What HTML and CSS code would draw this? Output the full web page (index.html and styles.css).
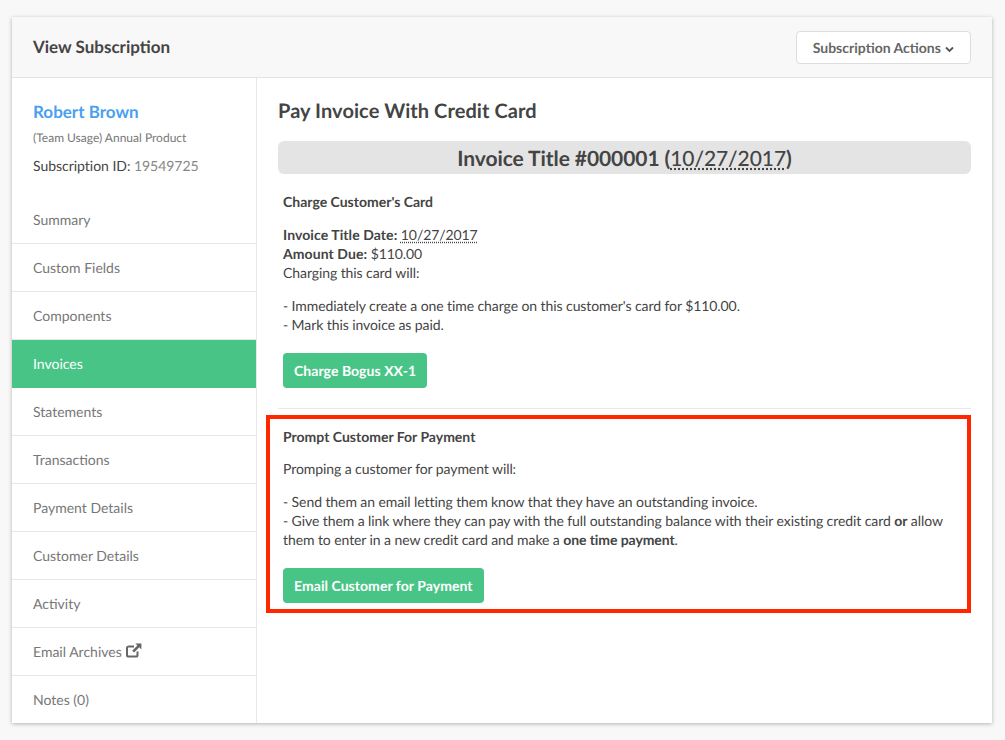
FILE: index.html
```html
<!DOCTYPE html>
<html lang="en">
<head>
<meta charset="utf-8">
<title>View Subscription</title>
<link rel="stylesheet" href="styles.css">
</head>
<body>
<div class="card">
  <header class="card-head">
    <h1>View Subscription</h1>
    <button class="actions">Subscription Actions
      <svg class="chev" width="9" height="7" viewBox="0 0 9 7"><path d="M1 1.5 4.5 5 8 1.5" fill="none" stroke="#555" stroke-width="1.8"/></svg>
    </button>
  </header>
  <div class="card-body">
    <aside class="side">
      <div class="who">
        <a class="name">Robert Brown</a>
        <div class="product">(Team Usage) Annual Product</div>
        <div class="subid">Subscription ID: <span>19549725</span></div>
      </div>
      <nav class="nav">
        <a>Summary</a>
        <a>Custom Fields</a>
        <a>Components</a>
        <a class="active">Invoices</a>
        <a>Statements</a>
        <a>Transactions</a>
        <a>Payment Details</a>
        <a>Customer Details</a>
        <a>Activity</a>
        <a>Email Archives <svg class="ext" width="16" height="15" viewBox="0 0 16 15"><path d="M11.5 8.5V12a1.6 1.6 0 0 1-1.6 1.6H2.6A1.6 1.6 0 0 1 1 12V5a1.6 1.6 0 0 1 1.6-1.6H8" fill="none" stroke="#666" stroke-width="2"/><path d="M9.4.4h6v6l-2.1-2.1-5.2 5.3-1.9-1.9 5.2-5.3z" fill="#666"/></svg></a>
        <a>Notes (0)</a>
      </nav>
    </aside>
    <main class="main">
      <h2>Pay Invoice With Credit Card</h2>
      <div class="invoice-bar">Invoice Title #000001 (<abbr>10/27/2017</abbr>)</div>
      <section class="charge">
        <h3>Charge Customer's Card</h3>
        <p><b class="label">Invoice Title Date:</b> <abbr>10/27/2017</abbr><br><b class="label">Amount Due:</b> $110.00<br>Charging this card will:</p>
        <p>- Immediately create a one time charge on this customer's card for $110.00.<br>- Mark this invoice as paid.</p>
        <button class="btn">Charge Bogus XX-1</button>
      </section>
      <hr class="rule">
      <section class="prompt">
        <h3>Prompt Customer For Payment</h3>
        <p>Promping a customer for payment will:</p>
        <p>- Send them an email letting them know that they have an outstanding invoice.<br>- Give them a link where they can pay with the full outstanding balance with their existing credit card <b>or</b> allow them to enter in a new credit card and make a <b>one time payment</b>.</p>
        <button class="btn">Email Customer for Payment</button>
      </section>
    </main>
  </div>
</div>
</body>
</html>
```
FILE: styles.css
```css
* { box-sizing: border-box; }
html, body { margin: 0; height: 100%; }
body {
  background: #f8f8f8;
  font-family: Lato, "Open Sans", sans-serif;
  font-size: 14px;
  line-height: 19px;
  color: #444;
  padding: 17px 13px 0 12px;
  overflow: hidden;
  text-rendering: geometricPrecision;
}
.card {
  background: #fff;
  height: 706px;
  box-shadow: 0 1px 4px rgba(0,0,0,.28);
  display: flex;
  flex-direction: column;
}
.card-head {
  height: 61px;
  flex: none;
  background: #f8f8f8;
  border-bottom: 1px solid #e4e4e4;
  display: flex;
  align-items: center;
  justify-content: space-between;
  padding: 0 21px;
}
.card-head h1 { margin: 0 0 2px; font-size: 17px; font-weight: 700; color: #444; }
.actions {
  height: 33px;
  width: 175px;
  background: #fff;
  border: 1px solid #ddd;
  border-radius: 4px;
  font: 700 14px Lato, sans-serif;
  color: #666;
  padding: 0;
  white-space: nowrap;
  text-rendering: geometricPrecision;
}
.chev { margin-left: 1px; }
.card-body { flex: 1; display: flex; min-height: 0; }
.side { width: 245px; flex: none; border-right: 1px solid #e8e8e8; }
.who { padding: 23px 21px 0; height: 118px; }
.name { display: block; font-size: 17px; font-weight: 700; color: #4a9ff0; line-height: 22px; }
.product { font-size: 12px; color: #777; margin-top: 7px; line-height: 16px; }
.subid { color: #444; margin-top: 10px; letter-spacing: -0.03px; }
.subid span { color: #888; }
.nav a {
  display: flex;
  align-items: center;
  gap: 4px;
  height: 48px;
  padding: 0 21px 1px;
  color: #777;
  border-bottom: 1px solid #e8e8e8;
}
.nav a:last-child { border-bottom: 0; }
.nav a.active { background: #48c586; color: #fff; border-bottom-color: #48c586; }
.ext { margin-top: -1px; }
.main { flex: 1; padding: 20px 21px 0; min-width: 0; }
h2 { margin: 0; font-size: 20px; line-height: 26px; font-weight: 700; color: #444; letter-spacing: 0.07px; }
.invoice-bar {
  margin-top: 17px;
  height: 33px;
  background: #e4e4e4;
  border-radius: 6px;
  text-align: center;
  font-size: 21px;
  line-height: 35px;
  font-weight: 700;
  color: #444;
  letter-spacing: -0.08px;
}
abbr { text-decoration: underline dotted; text-underline-offset: 2px; }
.invoice-bar abbr { font-weight: 500; }
h3 { margin: 0; font-size: 14px; line-height: 19px; font-weight: 700; color: #444; }
p { margin: 0 0 14px; letter-spacing: -0.08px; }
p:last-of-type { margin-bottom: 19px; }
b { font-weight: 700; }
.label { letter-spacing: 0.08px; }
.charge { padding: 18px 5px 0; }
.charge h3 { margin-bottom: 14px; }
.btn {
  display: block;
  height: 35px;
  padding: 0 11px;
  background: #48c586;
  color: #fff;
  border: 0;
  border-radius: 4px;
  font: 700 14px Lato, sans-serif;
  letter-spacing: 0.05px;
  text-rendering: geometricPrecision;
}
.rule { margin: 20px 0 0; border: 0; border-top: 1px solid #e8e8e8; }
.prompt {
  margin: 6px 0 0 -12px;
  height: 198px;
  border: 4px solid #ff2600;
  padding: 8px 15px 0 13px;
}
.prompt h3 { margin-bottom: 13px; }
```
